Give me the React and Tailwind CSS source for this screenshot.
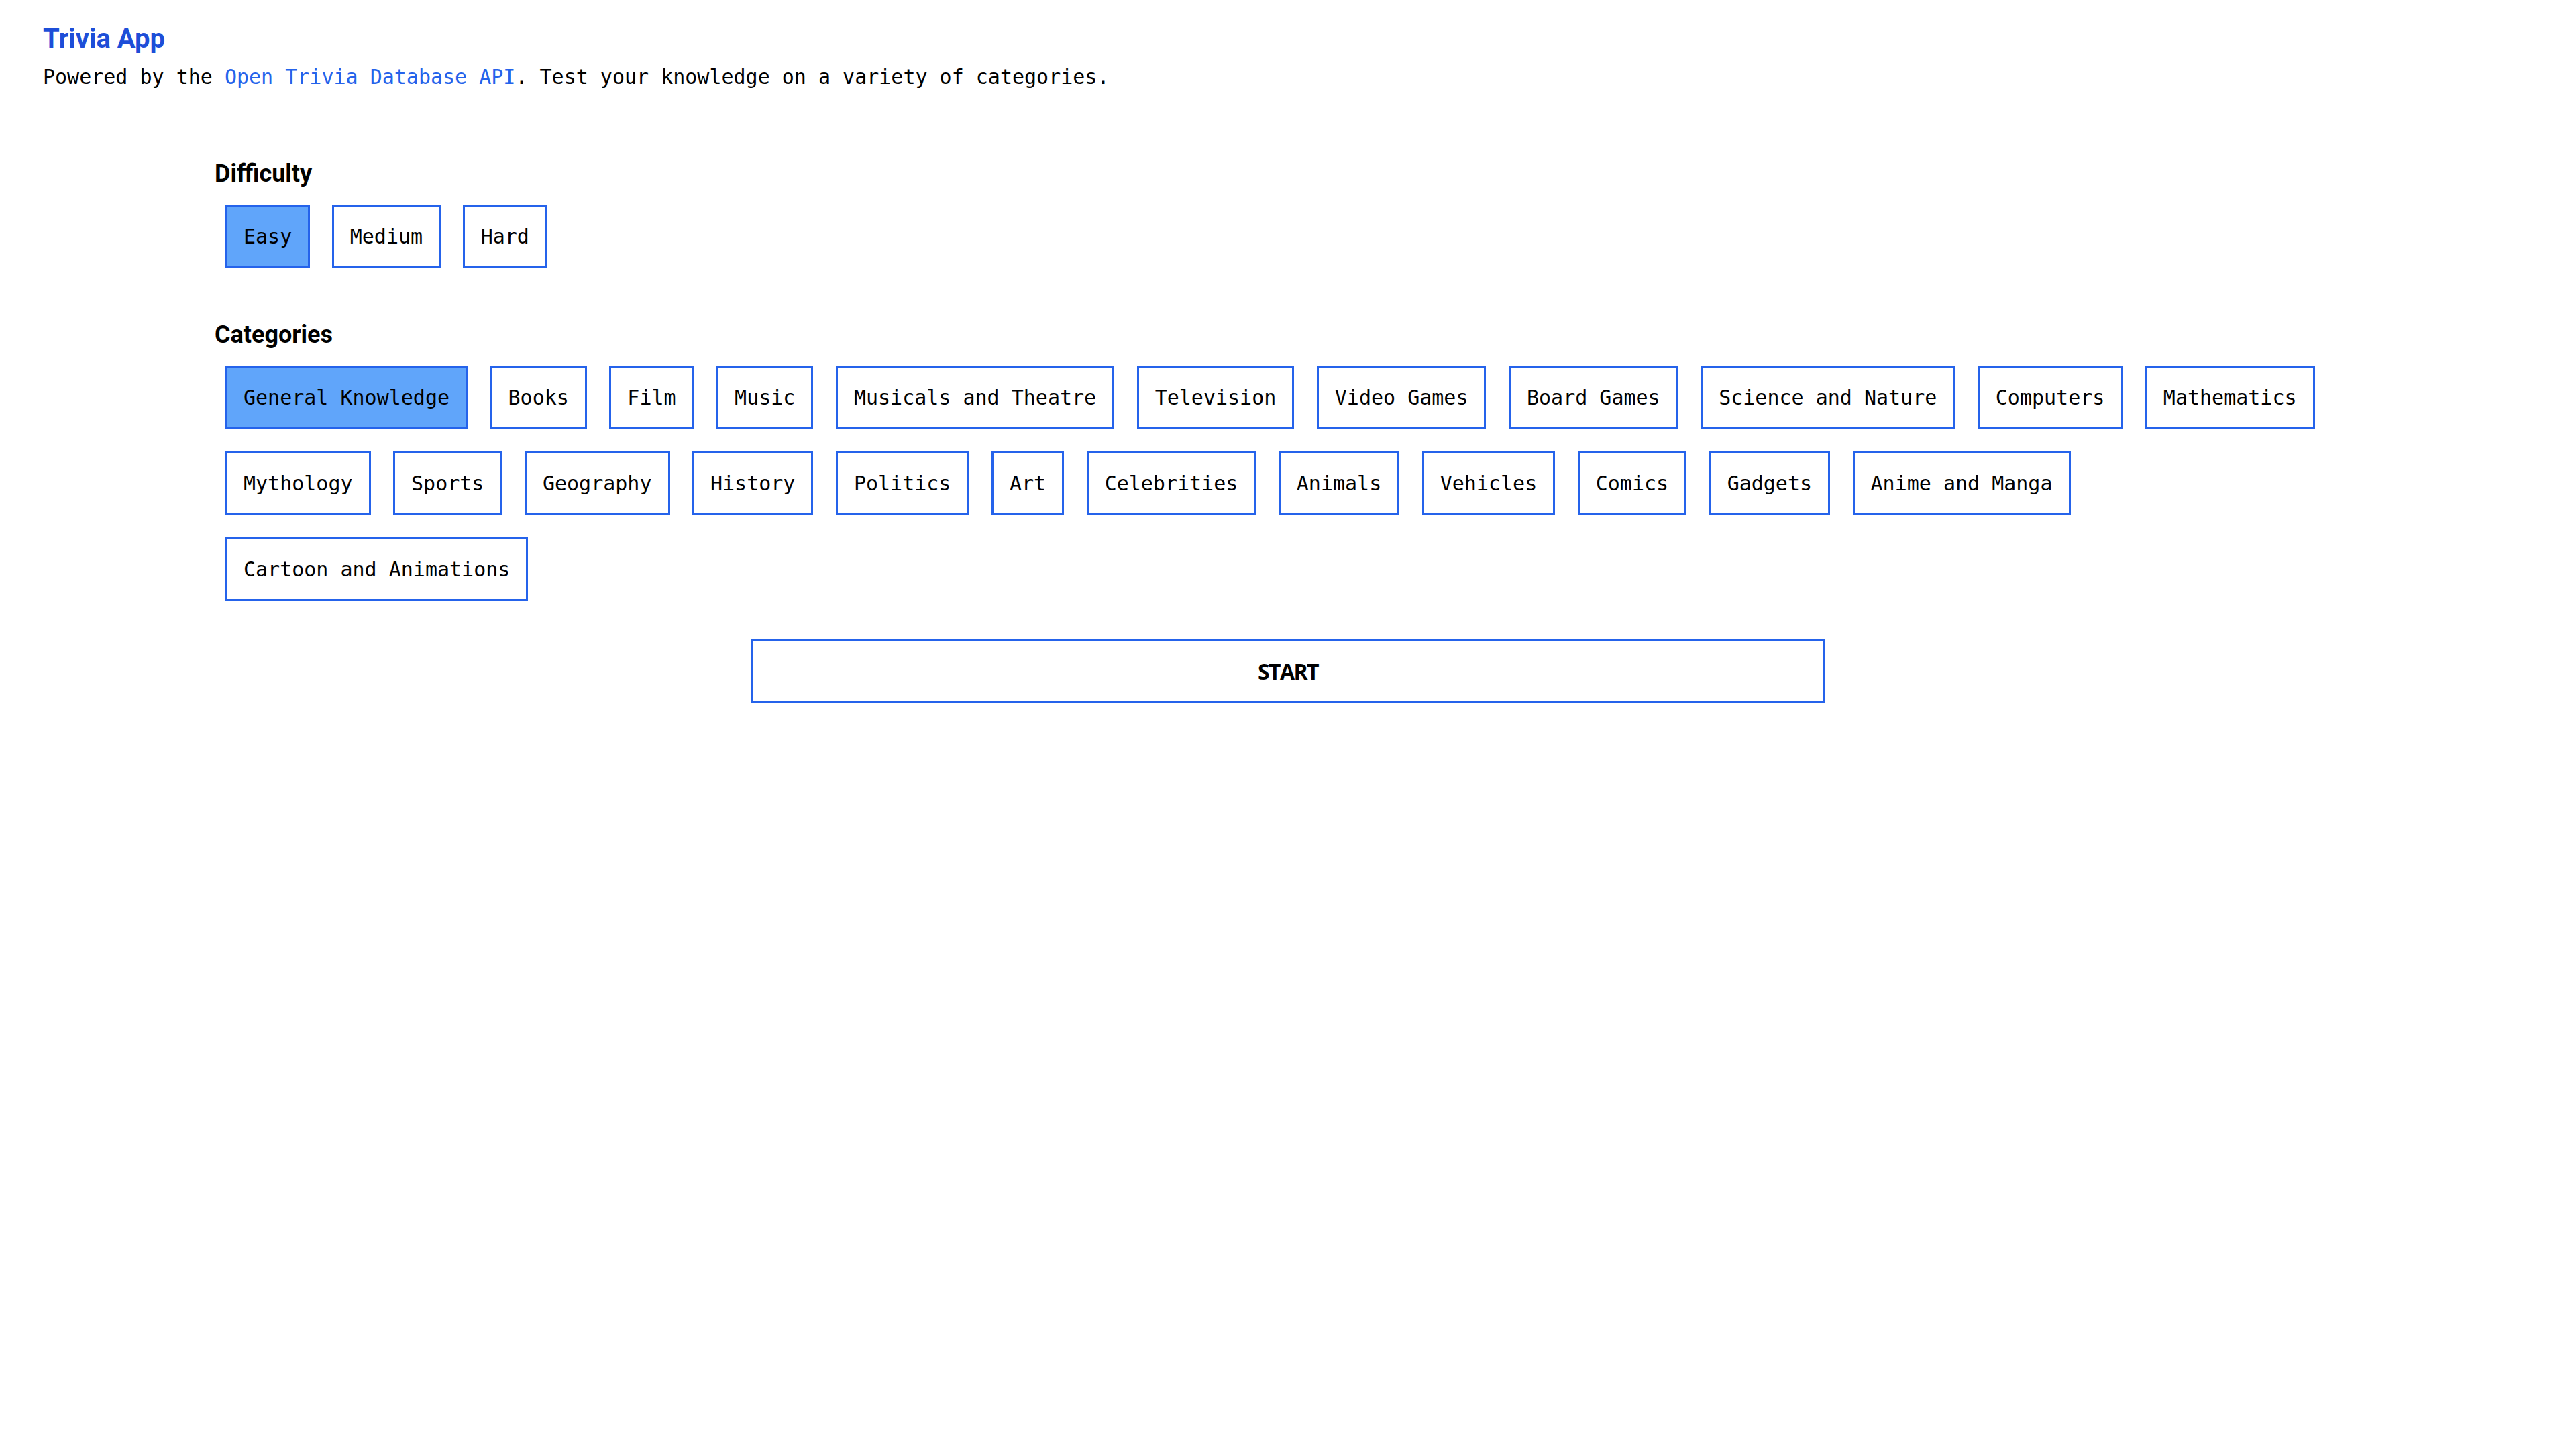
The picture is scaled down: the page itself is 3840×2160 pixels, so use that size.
import React, { useState } from "react";

const difficulties = ["Easy", "Medium", "Hard"];

const categories = [
  "General Knowledge",
  "Books",
  "Film",
  "Music",
  "Musicals and Theatre",
  "Television",
  "Video Games",
  "Board Games",
  "Science and Nature",
  "Computers",
  "Mathematics",
  "Mythology",
  "Sports",
  "Geography",
  "History",
  "Politics",
  "Art",
  "Celebrities",
  "Animals",
  "Vehicles",
  "Comics",
  "Gadgets",
  "Anime and Manga",
  "Cartoon and Animations",
];

const OptionButton = ({ label, active, onClick }) => (
  <button
    type="button"
    onClick={onClick}
    className={`h-[95px] px-6 border-[3px] border-[#2563eb] flex items-center font-['DejaVu_Sans_Mono',monospace] text-[30px] leading-[35px] text-black ${
      active ? "bg-[#60a5fa]" : "bg-white"
    }`}
  >
    {label}
  </button>
);

export default function App() {
  const [difficulty, setDifficulty] = useState("Easy");
  const [category, setCategory] = useState("General Knowledge");

  return (
    <div className="min-h-screen bg-white px-16 pt-[34px] text-black">
      <h1 className="font-['Roboto',sans-serif] font-bold text-[40px] leading-[47px] text-[#1d4ed8]">
        Trivia App
      </h1>
      <p className="mt-[16px] font-['DejaVu_Sans_Mono',monospace] text-[30px] leading-[35px]">
        Powered by the{" "}
        <a href="#" className="text-[#2563eb]">
          Open Trivia Database API
        </a>
        . Test your knowledge on a variety of categories.
      </p>

      <div className="w-[3200px] mx-auto mt-[106px]">
        <h2 className="font-['Roboto',sans-serif] font-bold text-[36px] leading-[42px]">
          Difficulty
        </h2>
        <div className="mt-[25px] pl-4 flex gap-x-[32.5px]">
          {difficulties.map((d) => (
            <OptionButton
              key={d}
              label={d}
              active={difficulty === d}
              onClick={() => setDifficulty(d)}
            />
          ))}
        </div>

        <h2 className="mt-[78px] font-['Roboto',sans-serif] font-bold text-[36px] leading-[42px]">
          Categories
        </h2>
        <div className="mt-[25px] pl-4 flex flex-wrap gap-x-[33.5px] gap-y-[33px]">
          {categories.map((c) => (
            <OptionButton
              key={c}
              label={c}
              active={category === c}
              onClick={() => setCategory(c)}
            />
          ))}
        </div>

        <button
          type="button"
          className="mt-[57px] mx-auto w-[1600px] h-[95px] border-[3px] border-[#2563eb] bg-white flex items-center justify-center font-['Open_Sans',sans-serif] font-bold text-[32px] tracking-[-0.05em] leading-[40px]"
        >
          START
        </button>
      </div>
    </div>
  );
}
